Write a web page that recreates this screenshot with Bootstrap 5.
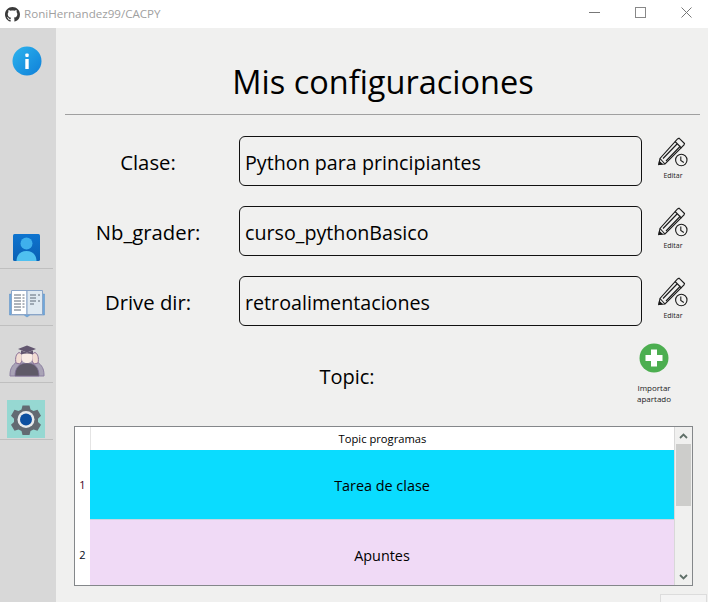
<!DOCTYPE html>
<html lang="en">
<head>
    <meta charset="UTF-8">
    <title>RoniHernandez99/CACPY</title>
    <link rel="stylesheet" href="https://cdn.jsdelivr.net/npm/bootstrap@5.3.0/dist/css/bootstrap.min.css">
    <style>
        html, body { height: 100%; overflow: hidden; }
        body { background: #f0f0ef; font-family: "Open Sans", "Liberation Sans", sans-serif; color: #000; }
        .title-strip { height: 28px; background: #fff; color: #a0a0a0; font-size: 11.6px; padding-left: 5px; }
        .win-btns { padding-bottom: 5px; margin-right: -1px; }
        .win-btn { width: 46px; text-align: center; }
        .app-body { height: 574px; }
        .side-bar { width: 56px; background: #d8d8d8; }
        .side-info { height: 184px; padding-top: 18px; padding-right: 2px; }
        .side-item { height: 57px; border-bottom: 1px solid #bfbfbf; margin-right: 3px; padding-bottom: 7px; }
        .side-grad { padding-bottom: 5px; }
        .side-gear { padding-bottom: 1px; padding-right: 1px; }
        .main-area { width: 652px; }
        .main-title { font-size: 32.5px; line-height: 46px; height: 86px; padding: 31px 0 0 2px; margin: 0; font-weight: 400; }
        .title-rule { height: 1px; background: #a0a0a0; margin: 0 8px 0 9px; }
        .form-wrap { padding-top: 21px; }
        .cfg-row { height: 50px; margin-bottom: 20px; }
        .cfg-label { width: 183px; text-align: center; font-size: 20.3px; padding: 2px 0 0 1px; }
        .cfg-input { width: 403px; height: 50px; border: 1px solid #111; border-radius: 6px; background: transparent; font-size: 19.7px; padding: 2px 5px 0; box-shadow: none; color: #000; }
        .edit-btn { width: 60px; margin-left: 1px; font-size: 7px; line-height: 9px; text-align: center; color: #222; padding-top: 1px; }
        .edit-btn svg { display: block; margin: 0 auto 2px; }
        .topic-row { height: 86px; margin-top: -6px; }
        .topic-label { width: 582px; text-align: center; font-size: 20px; padding-top: 22px; }
        .import-btn { width: 60px; margin-left: -14px; font-size: 8px; line-height: 11px; text-align: center; color: #222; padding-top: 3px; }
        .import-btn svg { margin-bottom: 9px; }
        .grid-box { width: 619px; height: 160px; margin-left: 18px; border: 1px solid #84878a; background: #fff; overflow: hidden; }
        .grid-nums { width: 15px; font-size: 11px; text-align: center; background: #fff; }
        .grid-corner { height: 23px; }
        .grid-cols { width: 585px; }
        .grid-head { height: 23px; font-size: 11.2px; line-height: 24px; text-align: center; border-left: 1px solid #e4e4e4; }
        .grid-cell { font-size: 14.4px; padding-top: 2px; }
        .cell-cyan { height: 70px; background: #0adcff; border-bottom: 1px solid #c8d4e0; }
        .cell-lilac { height: 70px; background: #f0daf6; }
        .num-one { height: 70px; color: #40001a; }
        .num-two { height: 70px; color: #000a20; }
        .scroll-col { width: 18px; height: 158px; background: #f0f0ef; border-left: 1px solid #d8d8d8; }
        .scroll-arrow { height: 17px; }
        .scroll-thumb { height: 62px; background: #cdcdcb; margin: 0 1px; }
        .corner-tab { width: 47px; height: 9px; background: #f4f4f4; border: 1px solid #dcdcdc; border-bottom: 0; margin-top: 8px; margin-left: 604px; }
    </style>
</head>
<body>

<!-- window title -->
<div class="title-strip d-flex align-items-center">
    <svg width="15" height="15" viewBox="0 0 16 16" fill="#3a3a3a"><path d="M8 0C3.58 0 0 3.58 0 8c0 3.54 2.29 6.53 5.47 7.59.4.07.55-.17.55-.41 0-.2-.01-.87-.01-1.54-2.01.37-2.53-.49-2.69-.94-.09-.23-.48-.94-.82-1.13-.28-.15-.68-.52-.01-.53.63-.01 1.08.58 1.23.82.72 1.21 1.87.87 2.33.66.07-.52.28-.87.51-1.07-1.78-.2-3.64-.89-3.64-3.95 0-.87.31-1.59.82-2.15-.08-.2-.36-1.02.08-2.12 0 0 .67-.21 2.2.82.64-.18 1.32-.27 2-.27.68 0 1.36.09 2 .27 1.53-1.04 2.2-.82 2.2-.82.44 1.1.16 1.92.08 2.12.51.56.82 1.27.82 2.15 0 3.07-1.87 3.75-3.65 3.95.29.25.54.73.54 1.48 0 1.07-.01 1.93-.01 2.2 0 .21.15.46.55.38A8.013 8.013 0 0016 8c0-4.42-3.58-8-8-8z"/></svg>
    <span class="ms-1">RoniHernandez99/CACPY</span>
    <div class="win-btns ms-auto d-flex align-items-center">
        <div class="win-btn"><svg width="11" height="11" viewBox="0 0 11 11"><path d="M0 5.500H11" stroke="#777" fill="none"/></svg></div>
        <div class="win-btn"><svg width="11" height="11" viewBox="0 0 11 11"><rect x=".5" y=".5" width="10" height="10" fill="none" stroke="#888"/></svg></div>
        <div class="win-btn"><svg width="11" height="11" viewBox="0 0 11 11"><path d="M.5.5l10 10M10.500.5l-10 10" stroke="#777" fill="none"/></svg></div>
    </div>
</div>

<div class="app-body d-flex">
    <!-- sidebar -->
    <div class="side-bar">
        <div class="side-info d-flex justify-content-center align-items-start">
            <svg width="30" height="30" viewBox="0 0 30 30">
                <defs><linearGradient id="infoG" x1="0" y1="0" x2="1" y2="1"><stop offset="0" stop-color="#2db4ee"/><stop offset="1" stop-color="#0f7fd8"/></linearGradient></defs>
                <circle cx="15" cy="15" r="14.500" fill="url(#infoG)"/>
                <rect x="13.300" y="13" width="3.400" height="10" fill="#fff"/>
                <rect x="13.300" y="7.500" width="3.400" height="3.400" rx="1" fill="#fff"/>
            </svg>
        </div>
        <div class="side-item d-flex justify-content-center align-items-end">
            <svg width="27" height="27" viewBox="0 0 27 27">
                <defs><linearGradient id="userG" x1="0" y1="0" x2="0" y2="1"><stop offset="0" stop-color="#0e74cf"/><stop offset="1" stop-color="#0a60b4"/></linearGradient></defs>
                <rect width="27" height="27" rx="1.500" fill="url(#userG)"/>
                <circle cx="13.500" cy="9.500" r="6" fill="#3fb0ec"/>
                <path d="M3.500 27c0-6.500 4.500-10 10-10s10 3.500 10 10z" fill="#4fc0f0"/>
            </svg>
        </div>
        <div class="side-item d-flex justify-content-center align-items-end">
            <svg width="36" height="29" viewBox="0 0 36 29">
                <path d="M0.500 5V26H15L18 28L21 26H35.500V5H33V23H3V5z" fill="#6fa8dc" stroke="#5a8fc4" stroke-width=".5"/>
                <path d="M2.500 1.500H18V25.500H2.500z" fill="#fff" stroke="#8aa5c8"/>
                <path d="M18 1.500H33.500V25.500H18z" fill="#dfe9f1" stroke="#8aa5c8"/>
                <path d="M5 6H12M5 9H12M5 12H12M5 15H12M5 18H12M5 21H12M13.500 6H15.500M13.500 9H15.500M13.500 12H15.500M13.500 15H15.500M13.500 18H15.500M21 6H27M21 9H27M21 12H27M21 15H25M29 6H31M29 12H31" stroke="#5f6a78" stroke-width="1" fill="none"/>
            </svg>
        </div>
        <div class="side-item side-grad d-flex justify-content-center align-items-end">
            <svg width="36" height="32" viewBox="0 0 36 32">
                <path d="M1 30c0-6 2-10 7-13l4-4h12l4 4c5 3 7 7 7 13v1H1z" fill="#a9a3b6" stroke="#8b7fa0"/>
                <path d="M6 31c0-8 4-13 12-13s12 5 12 13z" fill="#5f5a68" stroke="#7e6f96" stroke-width=".8"/>
                <path d="M7 18c-1-5 0-9 3-10.500l3 1.500v7l-2 3zM29 18c1-5 0-9-3-10.500l-3 1.500v7l2 3z" fill="#f2ddd3" stroke="#8a6f96"/>
                <path d="M12.500 8h11v5c0 3-2.500 5-5.500 5s-5.500-2-5.500-5z" fill="#f8ebe4"/>
                <path d="M18 .5L27 4l-9 3.500L9 4z" fill="#62566f"/>
                <path d="M12 5.500v4c4-1.500 8-1.500 12 0v-4l-6 2z" fill="#62566f"/>
            </svg>
        </div>
        <div class="side-item side-gear d-flex justify-content-center align-items-end">
            <svg width="38" height="38" viewBox="0 0 38 38">
                <rect width="38" height="38" fill="#96d8d2"/>
                <path d="M15.500 5.500h7l1 4 3 1.500 4-1.200 3.500 6-3 2.900v3.200l3 2.900-3.500 6-4-1.200-3 1.500-1 4h-7l-1-4-3-1.500-4 1.200-3.500-6 3-2.900v-3.200l-3-2.900 3.500-6 4 1.200 3-1.500z" fill="#636a72"/>
                <circle cx="19" cy="19.500" r="8.500" fill="#e8eaec"/>
                <circle cx="19" cy="19.500" r="6" fill="#0d4fa0"/>
            </svg>
        </div>
    </div>

    <!-- main content -->
    <div class="main-area">
        <h1 class="main-title text-center">Mis configuraciones</h1>
        <div class="title-rule"></div>

        <div class="form-wrap">
            <div class="cfg-row d-flex align-items-center">
                <div class="cfg-label">Clase:</div>
                <input class="form-control cfg-input" type="text" value="Python para principiantes">
                <div class="edit-btn align-self-start">
                    <svg width="30" height="32" viewBox="0 0 30 32" fill="none" stroke="#1a1a1a" stroke-width="1.100">
                        <path d="M.8 27.500L2 21.500 19.500 2l1.500-.8 5.500 5.300-.5 1.500L7 27z"/>
                        <path d="M17 4.500l6.500 6.500M2 21.500l5 5.500M5 21.500L19.500 6.500M8 24L22.500 9"/>
                        <path d="M.8 27.500l.6-3 2.500 2.400z" fill="#1a1a1a"/>
                        <circle cx="23.300" cy="23" r="5.700" fill="#f0f0ef"/>
                        <path d="M22.800 19.500V23.500l3 2"/>
                    </svg>
                    <div>Editar</div>
                </div>
            </div>
            <div class="cfg-row d-flex align-items-center">
                <div class="cfg-label">Nb_grader:</div>
                <input class="form-control cfg-input" type="text" value="curso_pythonBasico">
                <div class="edit-btn align-self-start">
                    <svg width="30" height="32" viewBox="0 0 30 32" fill="none" stroke="#1a1a1a" stroke-width="1.100">
                        <path d="M.8 27.500L2 21.500 19.500 2l1.500-.8 5.500 5.300-.5 1.500L7 27z"/>
                        <path d="M17 4.500l6.500 6.500M2 21.500l5 5.500M5 21.500L19.500 6.500M8 24L22.500 9"/>
                        <path d="M.8 27.500l.6-3 2.500 2.400z" fill="#1a1a1a"/>
                        <circle cx="23.300" cy="23" r="5.700" fill="#f0f0ef"/>
                        <path d="M22.800 19.500V23.500l3 2"/>
                    </svg>
                    <div>Editar</div>
                </div>
            </div>
            <div class="cfg-row d-flex align-items-center">
                <div class="cfg-label">Drive dir:</div>
                <input class="form-control cfg-input" type="text" value="retroalimentaciones">
                <div class="edit-btn align-self-start">
                    <svg width="30" height="32" viewBox="0 0 30 32" fill="none" stroke="#1a1a1a" stroke-width="1.100">
                        <path d="M.8 27.500L2 21.500 19.500 2l1.500-.8 5.500 5.300-.5 1.500L7 27z"/>
                        <path d="M17 4.500l6.500 6.500M2 21.500l5 5.500M5 21.500L19.500 6.500M8 24L22.500 9"/>
                        <path d="M.8 27.500l.6-3 2.500 2.400z" fill="#1a1a1a"/>
                        <circle cx="23.300" cy="23" r="5.700" fill="#f0f0ef"/>
                        <path d="M22.800 19.500V23.500l3 2"/>
                    </svg>
                    <div>Editar</div>
                </div>
            </div>

            <div class="topic-row d-flex">
                <div class="topic-label">Topic:</div>
                <div class="import-btn">
                    <svg width="30" height="30" viewBox="0 0 30 30" class="d-block mx-auto">
                        <circle cx="15" cy="15" r="14.500" fill="#4cae50"/>
                        <path d="M12 6.500h6v5.500h5.500v6H18v5.500h-6V18H6.500v-6H12z" fill="#fff"/>
                    </svg>
                    <div>Importar<br>apartado</div>
                </div>
            </div>
        </div>

        <!-- topic table -->
        <div class="grid-box d-flex">
            <div class="grid-nums">
                <div class="grid-corner"></div>
                <div class="num-one d-flex align-items-center justify-content-center">1</div>
                <div class="num-two d-flex align-items-center justify-content-center">2</div>
            </div>
            <div class="grid-cols">
                <div class="grid-head">Topic programas</div>
                <div class="grid-cell cell-cyan d-flex align-items-center justify-content-center">Tarea de clase</div>
                <div class="grid-cell cell-lilac d-flex align-items-center justify-content-center">Apuntes</div>
            </div>
            <div class="scroll-col d-flex flex-column">
                <div class="scroll-arrow d-flex align-items-center justify-content-center">
                    <svg width="9" height="6" viewBox="0 0 9 6"><path d="M1 5l3.500-3.500L8 5" stroke="#5f6f68" stroke-width="1.800" fill="none"/></svg>
                </div>
                <div class="scroll-thumb"></div>
                <div class="scroll-arrow d-flex align-items-center justify-content-center mt-auto">
                    <svg width="9" height="6" viewBox="0 0 9 6"><path d="M1 1l3.500 3.500L8 1" stroke="#5f6f68" stroke-width="1.800" fill="none"/></svg>
                </div>
            </div>
        </div>
        <div class="corner-tab"></div>
    </div>
</div>

</body>
</html>
